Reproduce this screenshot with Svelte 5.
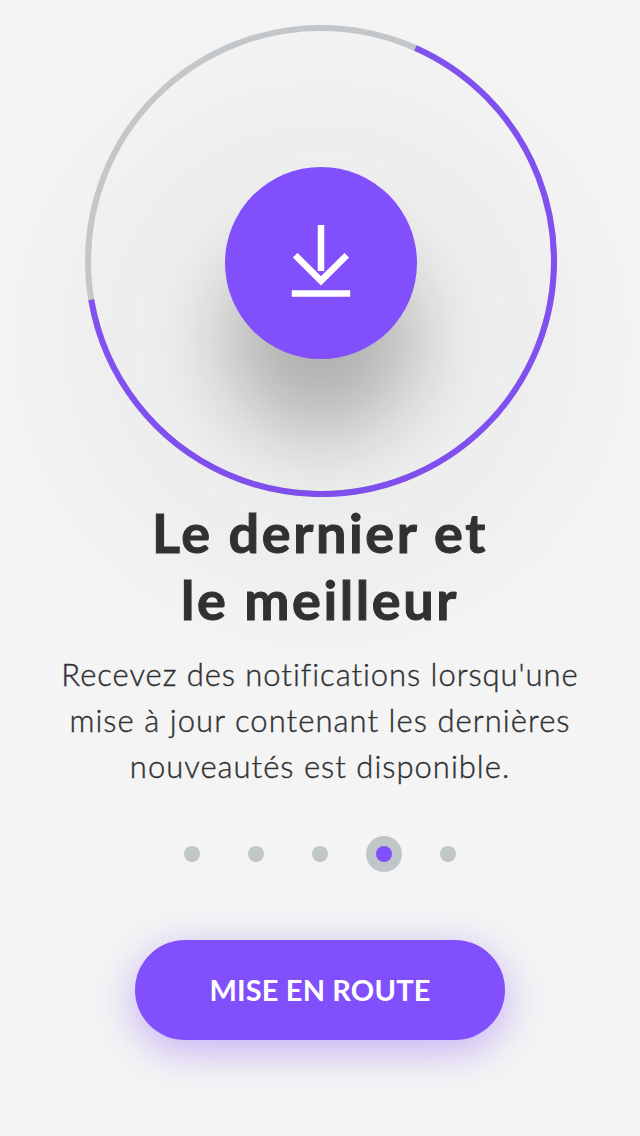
<!--
  Onboarding step: download ring, headline, copy, pager dots and the start button.
-->
<script lang="ts">
  const title = [
    { text: 'Le dernier et', spacing: 2.6 },
    { text: 'le meilleur', spacing: 2.6 },
  ];
  const copy = [
    { text: "Recevez des notifications lorsqu'une", spacing: 0.95 },
    { text: 'mise à jour contenant les dernières', spacing: 1.05 },
    { text: 'nouveautés est disponible.', spacing: 1 },
  ];
  const steps = 5;

  let current = $state(3);
</script>

<main class="screen">
  <div class="ring">
    <svg class="track" viewBox="0 0 472 472" aria-hidden="true">
      <circle cx="236" cy="236" r="233" stroke="#c3c7ca" />
      <circle
        cx="236"
        cy="236"
        r="233"
        stroke="#8150f0"
        pathLength="360"
        stroke-dasharray="236.5 123.5"
        transform="rotate(-66.1 236 236)"
      />
    </svg>
    <div class="disc">
      <svg class="arrow" viewBox="0 0 60 74" aria-hidden="true">
        <path d="M30 1v46M4.2 31.2l25.8 25.6 25.8-25.6M.8 69.5h58.4" />
      </svg>
    </div>
  </div>

  <h1>
    {#each title as line}
      <span class="line" style="letter-spacing: {line.spacing}px">{line.text}</span>
    {/each}
  </h1>

  <p>
    {#each copy as line}
      <span class="line" style="letter-spacing: {line.spacing}px">{line.text}</span>
    {/each}
  </p>

  <nav class="dots">
    {#each Array(steps) as _, i}
      <button class="dot" class:active={i === current} aria-label="{i + 1} / {steps}" onclick={() => (current = i)}></button>
    {/each}
  </nav>

  <button class="start">MISE EN ROUTE</button>
</main>

<style>
  :global(body) {
    margin: 0;
    background: #f4f4f4;
  }
  .screen {
    box-sizing: border-box;
    width: 640px;
    height: 1136px;
    padding-top: 25px;
    display: flex;
    flex-direction: column;
    align-items: center;
    overflow: hidden;
    background: radial-gradient(circle at 321px 340px, #f0f0f0 0, #eeeeee 210px, #f1f1f1 265px, #f4f4f4 330px);
    color: #2f3133;
    font-family: Lato, "Open Sans", sans-serif;
  }
  .ring {
    display: grid;
    place-items: center;
    width: 472px;
    height: 472px;
    margin-left: 2px;
    flex: none;
  }
  .track,
  .disc {
    grid-area: 1 / 1;
  }
  .track {
    width: 472px;
    height: 472px;
    fill: none;
    stroke-width: 6;
  }
  .disc {
    display: grid;
    place-items: center;
    width: 192px;
    height: 192px;
    margin-top: 4px;
    border-radius: 50%;
    background: #814ffb;
    box-shadow: 0 76px 84px rgba(0, 0, 0, 0.27);
  }
  .arrow {
    width: 60px;
    height: 74px;
    margin-bottom: 4px;
    fill: none;
    stroke: #fff;
    stroke-width: 6.5;
  }
  .line {
    display: block;
    white-space: nowrap;
  }
  h1 {
    margin: 2px 0 0;
    font-size: 54px;
    line-height: 67px;
    font-weight: 700;
    text-align: center;
    -webkit-text-stroke: 1px #2f3133;
  }
  p {
    margin: 18px 0 0;
    font-size: 31px;
    line-height: 46px;
    font-weight: 300;
    text-align: center;
    -webkit-text-stroke: 0.4px #2f3133;
  }
  .dots {
    display: flex;
    align-items: center;
    gap: 48px;
    height: 36px;
    margin-top: 47px;
  }
  .dot {
    width: 16px;
    height: 16px;
    padding: 0;
    border: 0;
    border-radius: 50%;
    background: #c1c6c9;
  }
  .dot.active {
    background: #814ffb;
    box-shadow: 0 0 0 10px #c1c6c9;
  }
  .start {
    width: 370px;
    height: 100px;
    margin-top: 68px;
    padding: 0 0 2px;
    border: 0;
    border-radius: 50px;
    background: #814ffb;
    box-shadow: 0 10px 40px rgba(129, 79, 251, 0.42);
    color: #fff;
    font: 700 29px Lato, "Open Sans", sans-serif;
    letter-spacing: 0.15px;
  }
</style>
